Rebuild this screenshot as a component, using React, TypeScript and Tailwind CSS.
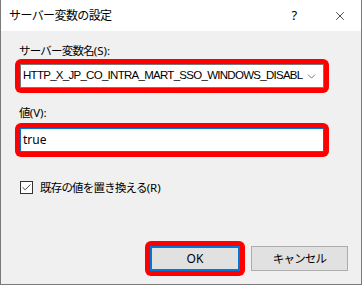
import { Check, ChevronDown, X } from 'lucide-react';

export default function App() {
  return (
    <div className="w-[364px] h-[286px] bg-white" style={{ fontFamily: '"Noto Sans", "Noto Sans CJK JP", sans-serif' }}>
      <div className="w-[362px] h-[285px] flex flex-col border-l border-r border-b border-[#7a7a7a] bg-[#f0f0f0] text-[11.5px] tracking-[-0.8px] text-black">
        {/* Title bar */}
        <div className="h-[31px] bg-white flex items-center pl-[8px]">
          <span className="flex-1 text-[12px] tracking-[-0.6px]">サーバー変数の設定</span>
          <span className="w-[46px] text-center text-[13px] pl-[4px]">?</span>
          <span className="w-[46px] flex justify-center pl-[4px]">
            <X className="w-[14px] h-[14px]" strokeWidth={1.2} />
          </span>
        </div>

        <div className="flex flex-col pl-[14px] pr-[32px]">
          {/* Server variable name */}
          <div className="mt-[13px] pl-[4px] leading-[14px]">
            サーバー変数名<span className="tracking-normal">(S):</span>
          </div>
          <div className="mt-[1px] rounded-[6px] bg-[#ff0000] p-[5px]">
            <div className="h-[24px] flex items-center bg-white border border-[#7a7a7a] pl-[2px] pr-[5px] gap-[2px]">
              <span className="flex-1 min-w-0 whitespace-nowrap font-['Liberation_Sans'] text-[11.5px] tracking-[-0.72px]">HTTP_X_JP_CO_INTRA_MART_SSO_WINDOWS_DISABL</span>
              <ChevronDown className="w-[13px] h-[13px] shrink-0 text-[#444]" strokeWidth={1.3} />
            </div>
          </div>

          {/* Value */}
          <div className="mt-[13px] pl-[4px] leading-[14px]">
            値<span className="tracking-normal">(V):</span>
          </div>
          <div className="mt-[3px] rounded-[6px] bg-[#ff0000] p-[5px]">
            <div className="h-[24px] flex items-center bg-white border border-[#0078d7] pl-[2px] tracking-normal text-[12px]">
              <span>true</span>
            </div>
          </div>

          {/* Checkbox */}
          <div className="mt-[22px] pl-[5px] flex items-center gap-[7px]">
            <span className="w-[13px] h-[13px] border border-[#333] bg-white flex items-center justify-center">
              <Check className="w-[11px] h-[11px]" strokeWidth={1.6} />
            </span>
            <span>
              既存の値を置き換える<span className="tracking-normal">(R)</span>
            </span>
          </div>
        </div>

        {/* Buttons */}
        <div className="mt-auto mb-[8px] flex justify-end items-center pr-[13px] gap-[6px]">
          <div className="rounded-[6px] bg-[#ff0000] p-[5px]">
            <div className="w-[90px] h-[25px] flex items-center justify-center bg-[#e1e1e1] border-2 border-[#0078d7] tracking-normal text-[12px]">OK</div>
          </div>
          <div className="w-[97px] h-[25px] flex items-center justify-center bg-[#e1e1e1] border border-[#adadad]">キャンセル</div>
        </div>
      </div>
    </div>
  );
}
